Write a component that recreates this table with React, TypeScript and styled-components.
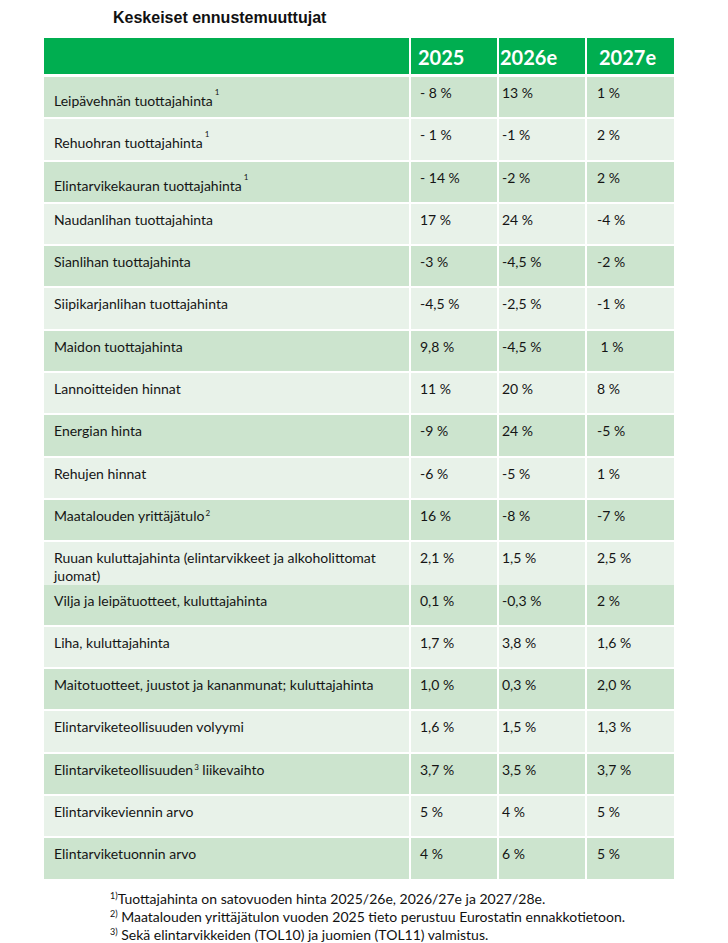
import React from 'react';
import styled, { createGlobalStyle } from 'styled-components';

const GlobalStyle = createGlobalStyle`
  html, body {
    margin: 0;
    padding: 0;
    background: #ffffff;
  }
`;

const Page = styled.div`
  width: 728px;
  height: 943px;
  box-sizing: border-box;
  padding-top: 8px;
  background: #ffffff;
`;

const Title = styled.h1`
  margin: 0 0 10px 113px;
  font-family: 'Liberation Sans', Arial, sans-serif;
  font-weight: 700;
  font-size: 16px;
  line-height: 20px;
  color: #111;
`;

const Table = styled.div`
  margin-left: 44px;
  width: 630px;
  display: flex;
  flex-direction: column;
  gap: 2px;
`;

const HeadRow = styled.div`
  display: grid;
  grid-template-columns: 365px 86px 86px 87px;
  column-gap: 2px;
  height: 36px;
  margin-bottom: 1px;
`;

const HeadCell = styled.div<{ $pad: number }>`
  background: #00ae50;
  color: #ffffff;
  font-family: Lato, 'Open Sans', sans-serif;
  font-weight: 700;
  font-size: 20px;
  display: flex;
  align-items: center;
  padding-left: ${p => p.$pad}px;
  padding-top: 2px;
`;

const DataRow = styled.div`
  display: grid;
  grid-template-columns: 365px 86px 86px 87px;
  column-gap: 2px;
  height: 40.3px;
`;

const Cell = styled.div<{ $dark: boolean }>`
  background: ${p => (p.$dark ? '#cce4ce' : '#e8f2e9')};
  color: #151515;
  font-family: Lato, 'Open Sans', sans-serif;
  font-size: 14px;
  line-height: 18px;
  box-sizing: border-box;
  white-space: pre;
`;

const LabelCell = styled(Cell)<{ $raised: boolean }>`
  padding: ${p => (p.$raised ? 15 : 7)}px 0 0 10px;
`;

const ValueCell = styled(Cell)<{ $pad: number }>`
  padding: 7px 0 0 ${p => p.$pad}px;
`;

const RaisedSup = styled.span`
  position: relative;
  top: -11px;
  margin-left: 2px;
  font-size: 8px;
  line-height: 0;
`;

const SmallSup = styled.span`
  position: relative;
  top: -5px;
  margin-left: 1px;
  font-size: 8px;
  line-height: 0;
`;

const Notes = styled.div`
  margin: 11px 0 0 110px;
  font-family: Lato, 'Open Sans', sans-serif;
  font-size: 14px;
  color: #111;
  display: flex;
  flex-direction: column;
  gap: 1px;
`;

const Note = styled.div`
  line-height: 17px;
`;

const NoteMark = styled.span`
  position: relative;
  top: -5px;
  font-size: 9px;
  line-height: 0;
`;

type Row = {
  label: React.ReactNode;
  raised?: boolean;
  values: [string, string, string];
};

const sup1 = <RaisedSup>1</RaisedSup>;

const rows: Row[] = [
  { label: <>Leipävehnän tuottajahinta{sup1}</>, raised: true, values: ['- 8 %', '13 %', '1 %'] },
  { label: <>Rehuohran tuottajahinta{sup1}</>, raised: true, values: ['- 1 %', '-1 %', '2 %'] },
  { label: <>Elintarvikekauran tuottajahinta{sup1}</>, raised: true, values: ['- 14 %', '-2 %', '2 %'] },
  { label: 'Naudanlihan tuottajahinta', values: ['17 %', '24 %', '-4 %'] },
  { label: 'Sianlihan tuottajahinta', values: ['-3 %', '-4,5 %', '-2 %'] },
  { label: 'Siipikarjanlihan tuottajahinta', values: ['-4,5 %', '-2,5 %', '-1 %'] },
  { label: 'Maidon tuottajahinta', values: ['9,8 %', '-4,5 %', '\u00a01 %'] },
  { label: 'Lannoitteiden hinnat', values: ['11 %', '20 %', '8 %'] },
  { label: 'Energian hinta', values: ['-9 %', '24 %', '-5 %'] },
  { label: 'Rehujen hinnat', values: ['-6 %', '-5 %', '1 %'] },
  { label: <>Maatalouden yrittäjätulo<SmallSup>2</SmallSup></>, values: ['16 %', '-8 %', '-7 %'] },
  {
    label: <>Ruuan kuluttajahinta (elintarvikkeet ja alkoholittomat<br />juomat)</>,
    values: ['2,1 %', '1,5 %', '2,5 %'],
  },
  { label: 'Vilja ja leipätuotteet, kuluttajahinta', values: ['0,1 %', '-0,3 %', '2 %'] },
  { label: 'Liha, kuluttajahinta', values: ['1,7 %', '3,8 %', '1,6 %'] },
  { label: 'Maitotuotteet, juustot ja kananmunat; kuluttajahinta', values: ['1,0 %', '0,3 %', '2,0 %'] },
  { label: 'Elintarviketeollisuuden volyymi', values: ['1,6 %', '1,5 %', '1,3 %'] },
  { label: <>Elintarviketeollisuuden<SmallSup>3</SmallSup> liikevaihto</>, values: ['3,7 %', '3,5 %', '3,7 %'] },
  { label: 'Elintarvikeviennin arvo', values: ['5 %', '4 %', '5 %'] },
  { label: 'Elintarviketuonnin arvo', values: ['4 %', '6 %', '5 %'] },
];

const years = ['2025', '2026e', '2027e'];
const valuePad = [9, 3, 10];
const headPad = [7, 1, 12];

export default function App() {
  return (
    <Page>
      <GlobalStyle />
      <Title>Keskeiset ennustemuuttujat</Title>
      <Table>
        <HeadRow>
          <HeadCell $pad={0} />
          {years.map((y, i) => (
            <HeadCell key={y} $pad={headPad[i]}>{y}</HeadCell>
          ))}
        </HeadRow>
        {rows.map((r, i) => (
          <DataRow key={i}>
            <LabelCell $dark={i % 2 === 0} $raised={!!r.raised}>{r.label}</LabelCell>
            {r.values.map((v, j) => (
              <ValueCell key={j} $dark={i % 2 === 0} $pad={valuePad[j]}>{v}</ValueCell>
            ))}
          </DataRow>
        ))}
      </Table>
      <Notes>
        <Note><NoteMark>1)</NoteMark>Tuottajahinta on satovuoden hinta 2025/26e, 2026/27e ja 2027/28e.</Note>
        <Note><NoteMark>2)</NoteMark> Maatalouden yrittäjätulon vuoden 2025 tieto perustuu Eurostatin ennakkotietoon.</Note>
        <Note><NoteMark>3)</NoteMark> Sekä elintarvikkeiden (TOL10) ja juomien (TOL11) valmistus.</Note>
      </Notes>
    </Page>
  );
}
